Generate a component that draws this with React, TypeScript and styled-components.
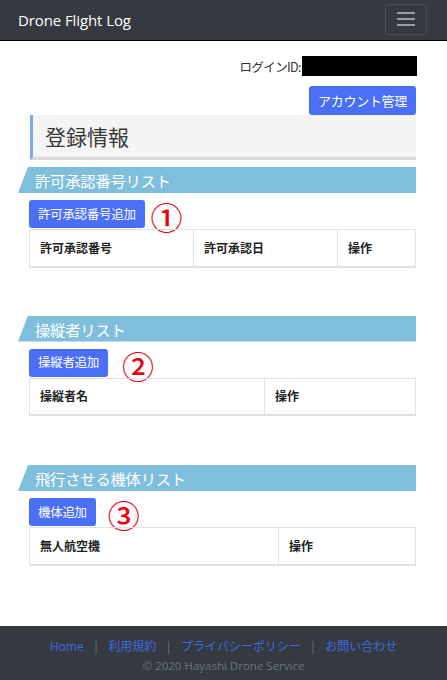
import React from "react";
import styled, { createGlobalStyle } from "styled-components";

const Global = createGlobalStyle`
  html, body { margin: 0; padding: 0; background: #fff; }
  body { font-family: "Noto Sans", "Noto Sans CJK JP", sans-serif; color: #212529; }
  * { box-sizing: border-box; }
`;

const Page = styled.div`
  min-height: 100vh;
  display: flex;
  flex-direction: column;
`;

const NavBar = styled.header`
  height: 41px;
  background: #343a40;
  border-bottom: 1px solid #000;
  display: flex;
  align-items: center;
  justify-content: space-between;
  padding: 0 20px 0 18px;
`;

const Brand = styled.div`
  color: #fff;
  font-family: "Open Sans", "Noto Sans", sans-serif;
  font-size: 15px;
  letter-spacing: -0.1px;
`;

const Toggler = styled.button`
  width: 42px;
  height: 31px;
  margin-top: -2px;
  border: 1px solid rgba(255, 255, 255, 0.1);
  border-radius: 4px;
  background: transparent;
  display: flex;
  flex-direction: column;
  align-items: center;
  justify-content: center;
  gap: 4px;
  padding: 0;
`;

const Bar = styled.span`
  display: block;
  width: 18px;
  height: 2px;
  background: #9a9da1;
`;

const Main = styled.main`
  padding: 15px 31px 60px 29px;
  display: flex;
  flex-direction: column;
`;

const LoginRow = styled.div`
  display: flex;
  justify-content: flex-end;
  align-items: center;
  font-size: 12.5px;
  color: #333;
  font-family: "Noto Sans CJK JP", sans-serif;
  letter-spacing: -0.6px;
`;

const Masked = styled.span`
  display: inline-block;
  width: 115px;
  height: 20px;
  background: #000;
  margin-left: 1px;
  margin-right: -1px;
`;

const AccountRow = styled.div`
  display: flex;
  justify-content: flex-end;
  margin-top: 10px;
`;

const Btn = styled.button<{ $big?: boolean }>`
  background: #4a6ef6;
  color: #fff;
  border: none;
  border-radius: 3px;
  font-family: "Noto Sans CJK JP", sans-serif;
  font-size: ${(p) => (p.$big ? "13px" : "12.5px")};
  height: ${(p) => (p.$big ? "29px" : "28px")};
  padding: 0 9px;
  line-height: 1;
  letter-spacing: -0.3px;
  flex: none;
`;

const Heading = styled.h1`
  margin: 0;
  height: 45px;
  margin-left: 1px;
  background: #f4f4f4;
  border-left: 3px solid #7da9e0;
  border-bottom: 3px solid #d8d8d8;
  display: flex;
  align-items: center;
  padding-left: 12px;
  font-family: "Noto Sans CJK JP", sans-serif;
  font-weight: 400;
  font-size: 21px;
  color: #3a3a3a;
`;

const Section = styled.section<{ $gap: number }>`
  margin-top: ${(p) => p.$gap}px;
  display: flex;
  flex-direction: column;
`;

const Banner = styled.h2`
  margin: 0 0 0 -11px;
  height: 26px;
  background: #7fbfdc;
  clip-path: polygon(10px 0, 100% 0, 100% 100%, 0 100%);
  color: #fff;
  font-family: "Noto Sans CJK JP", sans-serif;
  font-weight: 400;
  font-size: 15.3px;
  display: flex;
  align-items: center;
  padding-left: 17px;
  letter-spacing: -0.2px;
`;

const ActionRow = styled.div`
  display: flex;
  align-items: center;
  height: 28px;
  margin-top: 7px;
`;

const Circled = styled.span<{ $ml: number }>`
  color: #e8000e;
  font-family: "Noto Sans CJK JP", sans-serif;
  font-weight: 500;
  font-size: 32px;
  line-height: 28px;
  height: 28px;
  margin-left: ${(p) => p.$ml}px;
  margin-top: 4px;
`;

const Table = styled.table`
  border-collapse: collapse;
  width: 100%;
  margin-top: 1px;
  table-layout: fixed;
`;

const Th = styled.th`
  border: 1px solid #dee2e6;
  border-bottom-width: 2px;
  height: 37px;
  text-align: left;
  padding: 0 10px;
  font-family: "Noto Sans CJK JP", sans-serif;
  font-size: 12px;
  font-weight: 700;
  color: #222;
  line-height: 1;
`;

const Footer = styled.footer`
  margin-top: auto;
  height: 54px;
  background: #343a40;
  display: flex;
  flex-direction: column;
  align-items: center;
  padding-top: 12px;
`;

const Links = styled.div`
  display: flex;
  align-items: center;
  font-size: 12px;
  line-height: 18px;
`;

const Link = styled.a`
  color: #4169e1;
  text-decoration: none;
  font-family: "Open Sans", "Noto Sans CJK JP", sans-serif;
`;

const Sep = styled.span`
  color: #6c757d;
  margin: 0 9px;
  font-family: "Open Sans", sans-serif;
`;

const Copy = styled.div`
  color: #6c757d;
  font-family: "Open Sans", sans-serif;
  font-size: 11.5px;
  line-height: 16px;
  margin-top: 2px;
`;

type Sec = {
  title: string;
  button: string;
  num: string;
  numMl: number;
  gap: number;
  cols: { label: string; width: number }[];
};

const sections: Sec[] = [
  {
    title: "許可承認番号リスト",
    button: "許可承認番号追加",
    num: "①",
    numMl: 6,
    gap: 7,
    cols: [
      { label: "許可承認番号", width: 164 },
      { label: "許可承認日", width: 144 },
      { label: "操作", width: 78 },
    ],
  },
  {
    title: "操縦者リスト",
    button: "操縦者追加",
    num: "②",
    numMl: 14,
    gap: 48,
    cols: [
      { label: "操縦者名", width: 235 },
      { label: "操作", width: 151 },
    ],
  },
  {
    title: "飛行させる機体リスト",
    button: "機体追加",
    num: "③",
    numMl: 12,
    gap: 49,
    cols: [
      { label: "無人航空機", width: 249 },
      { label: "操作", width: 137 },
    ],
  },
];

export default function App() {
  return (
    <Page>
      <Global />
      <NavBar>
        <Brand>Drone Flight Log</Brand>
        <Toggler aria-label="menu">
          <Bar />
          <Bar />
          <Bar />
        </Toggler>
      </NavBar>
      <Main>
        <LoginRow>
          ログインID:
          <Masked />
        </LoginRow>
        <AccountRow>
          <Btn $big>アカウント管理</Btn>
        </AccountRow>
        <Heading>登録情報</Heading>
        {sections.map((s) => (
          <Section key={s.title} $gap={s.gap}>
            <Banner>{s.title}</Banner>
            <ActionRow>
              <Btn>{s.button}</Btn>
              <Circled $ml={s.numMl}>{s.num}</Circled>
            </ActionRow>
            <Table>
              <colgroup>
                {s.cols.map((c) => (
                  <col key={c.label} style={{ width: c.width }} />
                ))}
              </colgroup>
              <thead>
                <tr>
                  {s.cols.map((c) => (
                    <Th key={c.label}>{c.label}</Th>
                  ))}
                </tr>
              </thead>
            </Table>
          </Section>
        ))}
      </Main>
      <Footer>
        <Links>
          <Link href="#">Home</Link>
          <Sep>|</Sep>
          <Link href="#">利用規約</Link>
          <Sep>|</Sep>
          <Link href="#">プライバシーポリシー</Link>
          <Sep>|</Sep>
          <Link href="#">お問い合わせ</Link>
        </Links>
        <Copy>© 2020 Hayashi Drone Service</Copy>
      </Footer>
    </Page>
  );
}
